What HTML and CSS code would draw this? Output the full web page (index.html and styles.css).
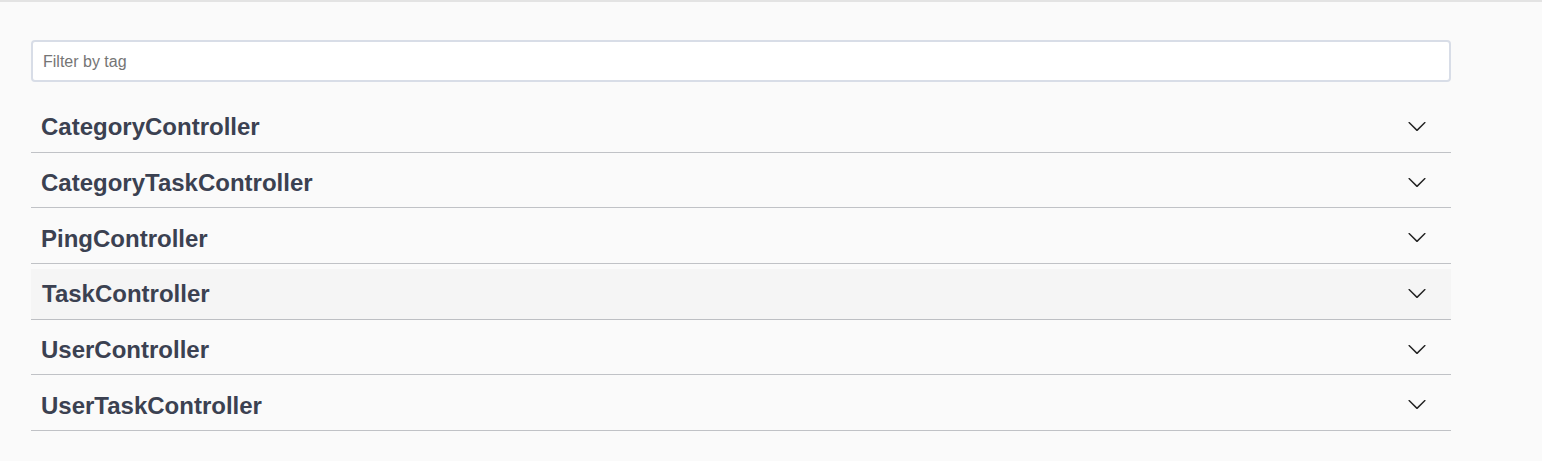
FILE: index.html
```html
<!DOCTYPE html>
<html>
<head>
<meta charset="utf-8">
<link rel="stylesheet" href="styles.css">
</head>
<body>
<div class="page">
  <input class="filter" type="text" placeholder="Filter by tag">
  <div class="tags">
    <div class="tag"><span class="name">CategoryController</span><svg class="arrow" viewBox="0 0 20 20" width="20" height="20"><path d="M17.418 6.109c.272-.268.709-.268.979 0s.271.701 0 .969l-7.908 7.83c-.27.268-.707.268-.979 0l-7.908-7.83c-.27-.268-.27-.701 0-.969.271-.268.709-.268.979 0L10 13.25l7.418-7.141z"/></svg></div>
    <div class="tag"><span class="name">CategoryTaskController</span><svg class="arrow" viewBox="0 0 20 20" width="20" height="20"><path d="M17.418 6.109c.272-.268.709-.268.979 0s.271.701 0 .969l-7.908 7.83c-.27.268-.707.268-.979 0l-7.908-7.83c-.27-.268-.27-.701 0-.969.271-.268.709-.268.979 0L10 13.25l7.418-7.141z"/></svg></div>
    <div class="tag"><span class="name">PingController</span><svg class="arrow" viewBox="0 0 20 20" width="20" height="20"><path d="M17.418 6.109c.272-.268.709-.268.979 0s.271.701 0 .969l-7.908 7.83c-.27.268-.707.268-.979 0l-7.908-7.83c-.27-.268-.27-.701 0-.969.271-.268.709-.268.979 0L10 13.25l7.418-7.141z"/></svg></div>
    <div class="tag hover"><span class="name">TaskController</span><svg class="arrow" viewBox="0 0 20 20" width="20" height="20"><path d="M17.418 6.109c.272-.268.709-.268.979 0s.271.701 0 .969l-7.908 7.83c-.27.268-.707.268-.979 0l-7.908-7.83c-.27-.268-.27-.701 0-.969.271-.268.709-.268.979 0L10 13.25l7.418-7.141z"/></svg></div>
    <div class="tag"><span class="name">UserController</span><svg class="arrow" viewBox="0 0 20 20" width="20" height="20"><path d="M17.418 6.109c.272-.268.709-.268.979 0s.271.701 0 .969l-7.908 7.83c-.27.268-.707.268-.979 0l-7.908-7.83c-.27-.268-.27-.701 0-.969.271-.268.709-.268.979 0L10 13.25l7.418-7.141z"/></svg></div>
    <div class="tag"><span class="name">UserTaskController</span><svg class="arrow" viewBox="0 0 20 20" width="20" height="20"><path d="M17.418 6.109c.272-.268.709-.268.979 0s.271.701 0 .969l-7.908 7.83c-.27.268-.707.268-.979 0l-7.908-7.83c-.27-.268-.27-.701 0-.969.271-.268.709-.268.979 0L10 13.25l7.418-7.141z"/></svg></div>
  </div>
</div>
</body>
</html>
```

FILE: styles.css
```css
html, body {
  margin: 0;
  padding: 0;
}
body {
  background: #fafafa;
  border-top: 2px solid #e3e3e3;
  font-family: "Liberation Sans", Arial, sans-serif;
  height: 459px;
  overflow: hidden;
}
.page {
  width: 1420px;
  padding: 38px 0 0 31px;
}
.filter {
  display: block;
  box-sizing: border-box;
  width: 100%;
  height: 42px;
  margin: 0 0 20px;
  padding: 1px 10px 0;
  border: 2px solid #d8dde7;
  border-radius: 4px;
  background: #fff;
  font-family: "Liberation Sans", Arial, sans-serif;
  font-size: 16px;
  color: #3b4151;
  outline: none;
}
.filter::placeholder {
  color: #757575;
}
.tags {
  display: flex;
  flex-direction: column;
  gap: 5px;
}
.tag {
  box-sizing: border-box;
  height: 50.7px;
  display: flex;
  align-items: center;
  justify-content: space-between;
  padding: 0 24px 0 10px;
  border-bottom: 1px solid rgba(59, 65, 81, 0.3);
}
.tag.hover {
  background: rgba(0, 0, 0, 0.02);
}
.tag.hover .name {
  padding-left: 1px;
}
.name {
  font-size: 24px;
  font-weight: bold;
  color: #3b4151;
  padding-top: 1px;
}
.arrow {
  fill: #222;
  display: block;
  margin-bottom: 2px;
}
```
